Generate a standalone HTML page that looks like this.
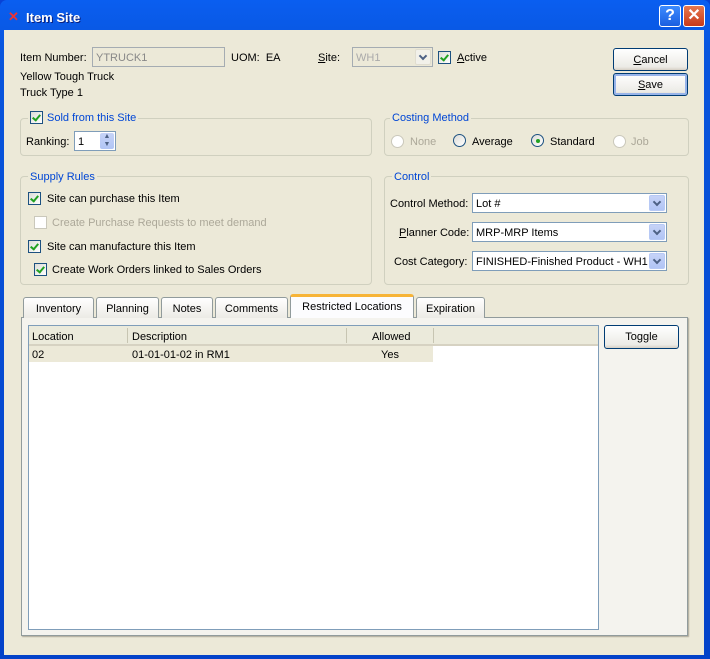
<!DOCTYPE html>
<html><head><style>
*{box-sizing:border-box;margin:0;padding:0}
body{width:710px;height:659px;overflow:hidden;font-family:"Liberation Sans",sans-serif;font-size:11px;color:#000;background:#0842d6;position:relative}
.a{position:absolute;white-space:nowrap}
#win{position:absolute;left:0;top:0;width:710px;height:659px;border-radius:7px 7px 0 0;background:linear-gradient(#0a5ef0,#0855dd 8%,#0342c9);}
#client{position:absolute;left:4px;top:30px;width:700px;height:625px;background:#ece9d8}
.title{left:26px;top:10px;color:#fff;font-weight:bold;font-size:13px;text-shadow:1px 1px #0a1f7a}
.tb{width:22px;height:22px;border:1px solid #fff;border-radius:3px;top:5px}
.inp{background:#fff;border:1px solid #7f9db9;height:20px;padding:4px 0 0 3px}
.dis{background:#ece9d8;color:#888}
.btn{border:1px solid #003c74;border-radius:3px;background:linear-gradient(#fff,#ecebe6 85%,#d6d0c5);text-align:center;padding-top:5px}
.cb{width:13px;height:13px;border:1px solid #1c5180;background:linear-gradient(135deg,#dcdcd7,#fff)}
.cb.on::after{content:"";position:absolute;left:3px;top:1px;width:3px;height:6px;border:solid #21a121;border-width:0 2px 2px 0;transform:rotate(40deg)}
.cb.off{border-color:#cac8bb;background:#fff}
.grp{border:1px solid #d0d0bf;border-radius:4px}
.gt{color:#0046d5;background:#ece9d8;padding:0 2px}
.rad{width:13px;height:13px;border-radius:50%;border:1px solid #1c5180;background:linear-gradient(135deg,#dcdcd7,#fff)}
.rad.d{border-color:#cac8bb;background:#fff}
.gray{color:#aca899}
.arr{position:absolute;right:1px;top:1px;width:16px;height:16px;border-radius:2px;background:linear-gradient(#c6d3f7,#b1c5f5);border:1px solid #b7c9f5}
.arr::after{content:"";position:absolute;left:4px;top:3px;width:4px;height:4px;border:solid #4d6185;border-width:0 2px 2px 0;transform:rotate(45deg)}
.tab{top:297px;height:21px;border:1px solid #919b9c;border-bottom:none;border-radius:3px 3px 0 0;background:linear-gradient(#fff,#ecebe5);text-align:center;padding-top:5px}
u{text-decoration:underline}
</style></head><body>
<div id="win"></div>
<div class="a" style="left:8px;top:9px;color:#e33;font-weight:bold;font-size:13px">✕</div>
<div class="a title">Item Site</div>
<div class="a tb" style="left:659px;background:linear-gradient(#3d8bff,#1a5fe0);color:#fff;font-weight:bold;font-size:16px;text-align:center;line-height:20px">?</div>
<div class="a tb" style="left:683px;background:linear-gradient(#e6784f,#c8391a);color:#fff;font-weight:bold;font-size:16px;text-align:center;line-height:20px">✕</div>
<div id="client"></div>

<div class="a" style="left:20px;top:52px">Item Number:</div>
<div class="a inp dis" style="left:92px;top:47px;width:133px;border-color:#a5acb2">YTRUCK1</div>
<div class="a" style="left:231px;top:52px">UOM:&nbsp; EA</div>
<div class="a" style="left:318px;top:52px"><u>S</u>ite:</div>
<div class="a inp dis" style="left:352px;top:47px;width:81px;border-color:#a5acb2;color:#aaa">WH1<div class="arr" style="background:#f2f1ea;border-color:#e0ddd0"></div></div>
<div class="a cb on" style="left:438px;top:51px"></div>
<div class="a" style="left:457px;top:52px"><u>A</u>ctive</div>
<div class="a btn" style="left:613px;top:48px;width:75px;height:23px"><u>C</u>ancel</div>
<div class="a btn" style="left:613px;top:73px;width:75px;height:23px;box-shadow:inset 0 0 0 2px #98b4e9"><u>S</u>ave</div>
<div class="a" style="left:20px;top:71px">Yellow Tough Truck</div>
<div class="a" style="left:20px;top:87px">Truck Type 1</div>

<div class="a grp" style="left:20px;top:118px;width:352px;height:38px"></div>
<div class="a gt" style="left:28px;top:111px;width:108px;height:14px"></div>
<div class="a cb on" style="left:30px;top:111px"></div>
<div class="a gt" style="left:45px;top:112px">Sold from this Site</div>
<div class="a" style="left:26px;top:136px">Ranking:</div>
<div class="a inp" style="left:74px;top:131px;width:42px">1<div style="position:absolute;right:1px;top:1px;width:14px;height:16px;background:linear-gradient(#c6d3f7,#b1c5f5);border-radius:2px;font-size:7px;color:#4d6185;text-align:center;line-height:8px">▲<br>▼</div></div>

<div class="a grp" style="left:384px;top:118px;width:305px;height:38px"></div>
<div class="a gt" style="left:390px;top:112px">Costing Method</div>
<div class="a rad d" style="left:391px;top:135px"></div><div class="a gray" style="left:410px;top:136px">None</div>
<div class="a rad" style="left:453px;top:134px"></div><div class="a" style="left:472px;top:136px">Average</div>
<div class="a rad" style="left:531px;top:134px"></div><div class="a" style="left:536px;top:139px;width:4px;height:4px;border-radius:50%;background:#21a121"></div><div class="a" style="left:550px;top:136px">Standard</div>
<div class="a rad d" style="left:613px;top:135px"></div><div class="a gray" style="left:631px;top:136px">Job</div>

<div class="a grp" style="left:20px;top:176px;width:352px;height:109px"></div>
<div class="a gt" style="left:28px;top:171px">Supply Rules</div>
<div class="a cb on" style="left:28px;top:192px"></div><div class="a" style="left:47px;top:193px">Site can purchase this Item</div>
<div class="a cb off" style="left:34px;top:216px"></div><div class="a gray" style="left:52px;top:217px">Create Purchase Requests to meet demand</div>
<div class="a cb on" style="left:28px;top:240px"></div><div class="a" style="left:47px;top:241px">Site can manufacture this Item</div>
<div class="a cb on" style="left:34px;top:263px"></div><div class="a" style="left:52px;top:264px">Create Work Orders linked to Sales Orders</div>

<div class="a grp" style="left:384px;top:176px;width:305px;height:109px"></div>
<div class="a gt" style="left:392px;top:171px">Control</div>
<div class="a" style="left:390px;top:198px">Control Method:</div>
<div class="a inp" style="left:472px;top:193px;width:195px">Lot #<div class="arr"></div></div>
<div class="a" style="left:399px;top:227px"><u>P</u>lanner Code:</div>
<div class="a inp" style="left:472px;top:222px;width:195px">MRP-MRP Items<div class="arr"></div></div>
<div class="a" style="left:394px;top:256px">Cost Cate<u>g</u>ory:</div>
<div class="a inp" style="left:472px;top:251px;width:195px">FINISHED-Finished Product - WH1<div class="arr"></div></div>

<div class="a" style="left:21px;top:317px;width:667px;height:319px;background:#f4f3ee;border:1px solid #919b9c;box-shadow:1px 1px 1px #aca899"></div>
<div class="a tab" style="left:23px;width:71px">Inventory</div>
<div class="a tab" style="left:96px;width:63px">Planning</div>
<div class="a tab" style="left:161px;width:52px">Notes</div>
<div class="a tab" style="left:215px;width:73px">Comments</div>
<div class="a tab" style="left:290px;top:294px;height:24px;width:124px;background:#fcfcfe;border-top:3px solid #f7b437;padding-top:4px">Restricted Locations</div>
<div class="a tab" style="left:416px;width:69px">Expiration</div>

<div class="a" style="left:28px;top:325px;width:571px;height:305px;background:#fff;border:1px solid #7f9db9"></div>
<div class="a" style="left:29px;top:326px;width:569px;height:20px;background:#ebeadb;border-bottom:2px solid #d6d2c2"></div>
<div class="a" style="left:127px;top:328px;width:1px;height:15px;background:#c7c5b2"></div>
<div class="a" style="left:346px;top:328px;width:1px;height:15px;background:#c7c5b2"></div>
<div class="a" style="left:433px;top:328px;width:1px;height:15px;background:#c7c5b2"></div>
<div class="a" style="left:32px;top:331px">Location</div>
<div class="a" style="left:132px;top:331px">Description</div>
<div class="a" style="left:372px;top:331px">Allowed</div>
<div class="a" style="left:29px;top:346px;width:404px;height:16px;background:#ece9d8"></div>
<div class="a" style="left:32px;top:349px">02</div>
<div class="a" style="left:132px;top:349px">01-01-01-02 in RM1</div>
<div class="a" style="left:381px;top:349px">Yes</div>
<div class="a btn" style="left:604px;top:325px;width:75px;height:24px">Toggle</div>
</body></html>
